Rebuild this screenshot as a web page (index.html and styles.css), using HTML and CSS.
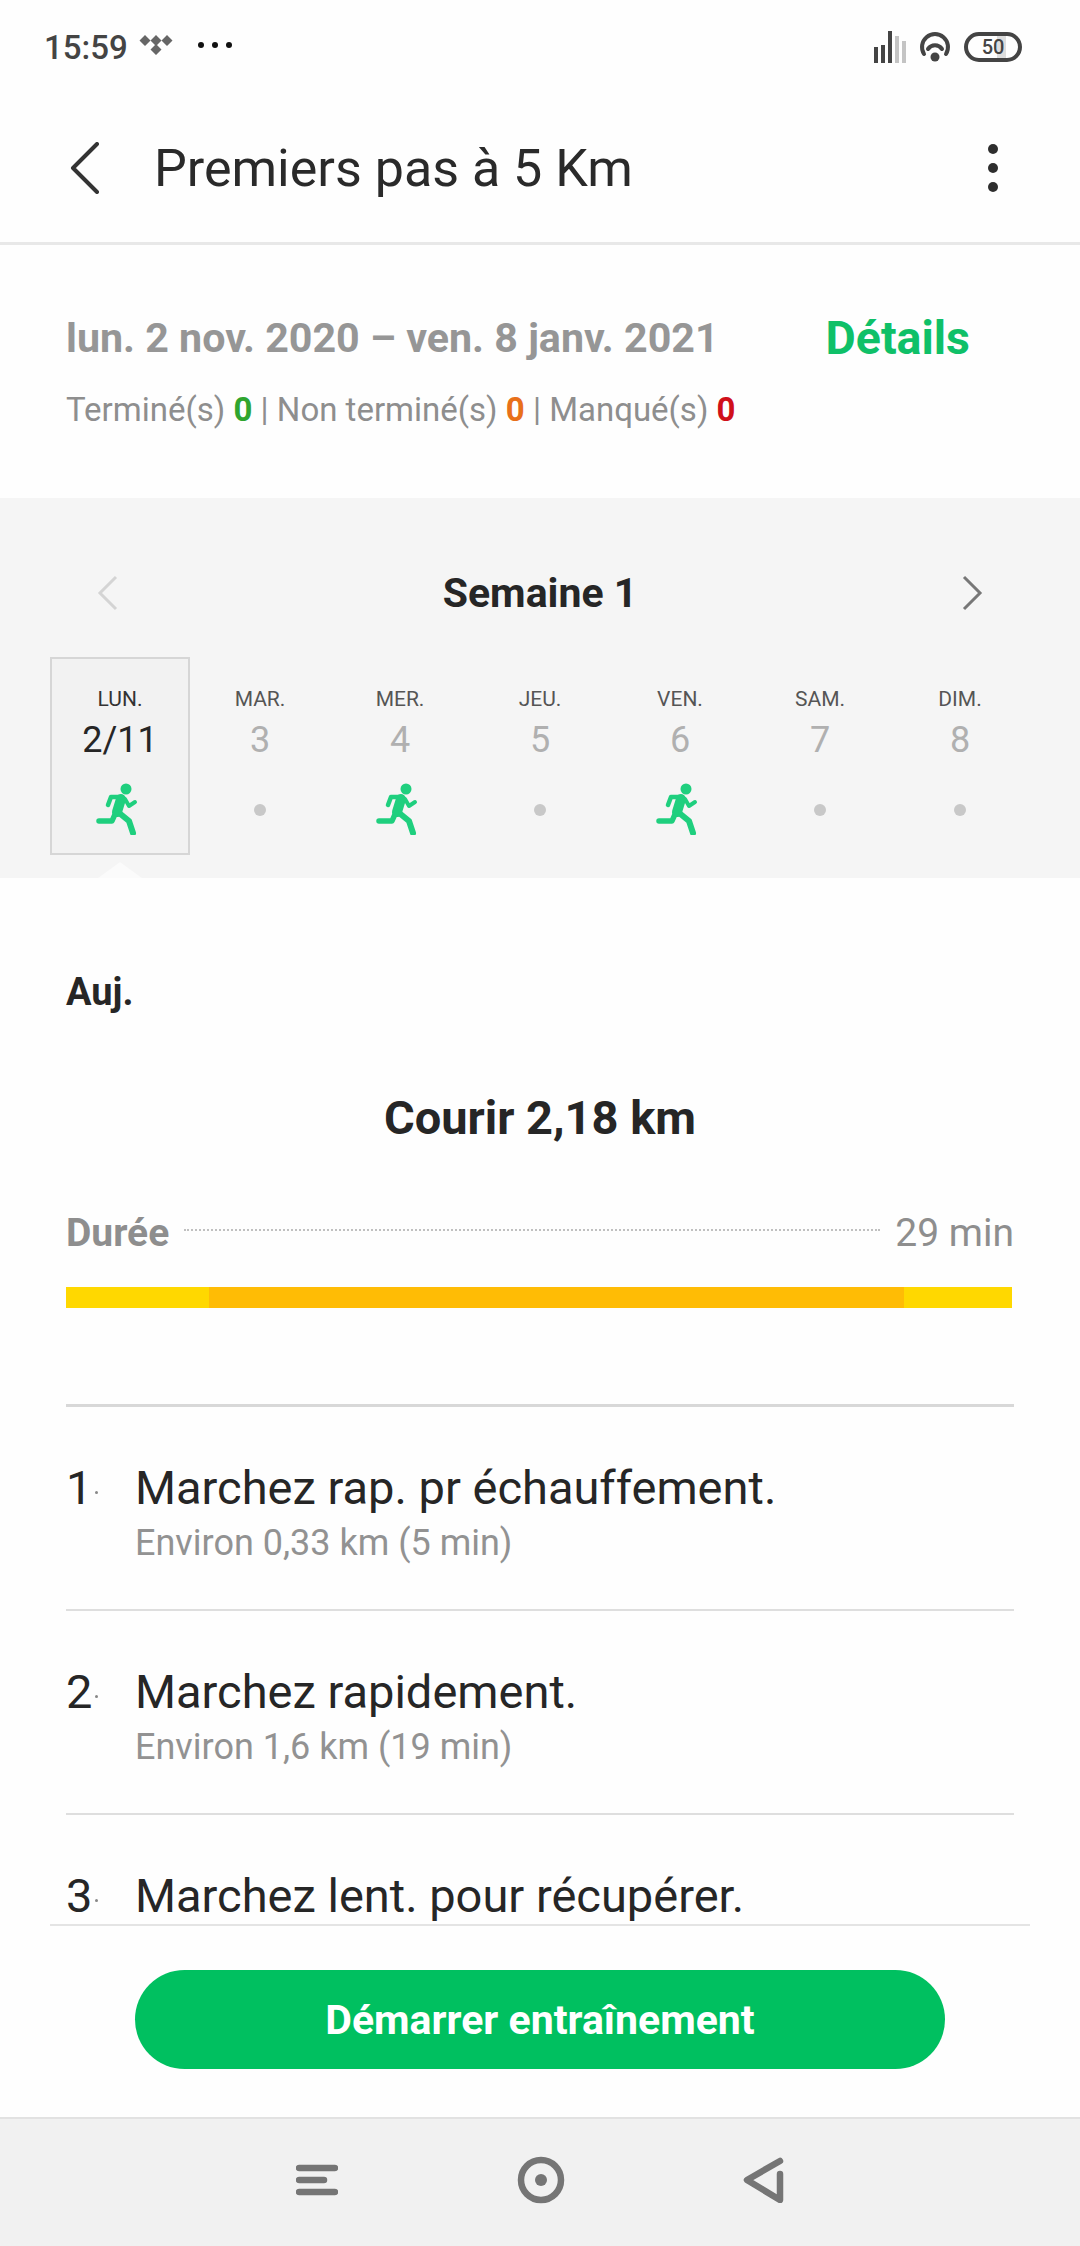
FILE: index.html
```html
<!DOCTYPE html>
<html lang="fr">
<head>
    <meta charset="UTF-8">
    <meta name="viewport" content="width=device-width, initial-scale=1.0">
    <title>Premiers pas à 5 Km</title>
    <link rel="stylesheet" href="styles.css">
</head>
<body>
    <svg class="sprite" width="0" height="0">
        <symbol id="runner" viewBox="0 0 50 52">
            <circle cx="31" cy="6" r="5.500" fill="#1fcf7e"/>
            <path d="M26 16 L22 29" fill="none" stroke="#1fcf7e" stroke-width="10" stroke-linecap="round"/>
            <path d="M27 14 L16 14 L13 22" fill="none" stroke="#1fcf7e" stroke-width="4.500" stroke-linecap="round" stroke-linejoin="round"/>
            <path d="M30 16 L34 23 L40 19" fill="none" stroke="#1fcf7e" stroke-width="4" stroke-linecap="round" stroke-linejoin="round"/>
            <path d="M23 29 L34 38 L38 50" fill="none" stroke="#1fcf7e" stroke-width="6" stroke-linecap="round" stroke-linejoin="round"/>
            <path d="M21 29 L17 38 L4 38" fill="none" stroke="#1fcf7e" stroke-width="5.500" stroke-linecap="round" stroke-linejoin="round"/>
        </symbol>
    </svg>

    <div class="status">
        <div class="status-left">
            <span class="time">15:59</span>
            <svg class="tidal" viewBox="0 0 34 20" width="34" height="20">
                <path d="M6 0l5.500 5.500-5.500 5.500-5.500-5.500zM17 0l5.500 5.500-5.500 5.500-5.500-5.500zM28 0l5.500 5.500-5.500 5.500-5.500-5.500zM17 9l5.500 5.500-5.500 5.500-5.500-5.500z" fill="#666"/>
            </svg>
            <div class="dots"><i></i><i></i><i></i></div>
        </div>
        <div class="status-right">
            <svg viewBox="0 0 32 32" width="32" height="32">
                <rect x="0" y="16" width="4" height="16" fill="#444"/>
                <rect x="7" y="14" width="4" height="18" fill="#444"/>
                <rect x="14" y="0" width="4" height="32" fill="#444"/>
                <rect x="21" y="5" width="4" height="27" fill="#c4c4c4"/>
                <rect x="28" y="10" width="4" height="22" fill="#c4c4c4"/>
            </svg>
            <svg viewBox="0 0 34 32" width="34" height="32">
                <path d="M6 23 A13 13 0 1 1 28 23" fill="none" stroke="#444" stroke-width="4" stroke-linecap="round"/>
                <path d="M10 18 A8.500 8.500 0 0 1 24 18" fill="none" stroke="#444" stroke-width="4" stroke-linecap="round"/>
                <circle cx="17" cy="26" r="4.500" fill="#444"/>
            </svg>
            <div class="battery"><span>50</span></div>
        </div>
    </div>

    <header class="topbar">
        <svg class="back" viewBox="0 0 34 52" width="34" height="52">
            <path d="M29 2 L5 26 L29 50" fill="none" stroke="#333" stroke-width="4" stroke-linecap="round" stroke-linejoin="round"/>
        </svg>
        <h1>Premiers pas à 5 Km</h1>
        <div class="more"><i></i><i></i><i></i></div>
    </header>

    <section class="summary">
        <div class="summary-top">
            <span class="range">lun. 2 nov. 2020 – ven. 8 janv. 2021</span>
            <span class="details">Détails</span>
        </div>
        <p class="counts">Terminé(s) <b class="green">0</b> | Non terminé(s) <b class="orange">0</b> | Manqué(s) <b class="red">0</b></p>
    </section>

    <section class="week">
        <div class="week-head">
            <svg viewBox="0 0 22 36" width="22" height="36"><path d="M19 2 L3 18 L19 34" fill="none" stroke="#d4d4d4" stroke-width="3"/></svg>
            <span>Semaine 1</span>
            <svg viewBox="0 0 22 36" width="22" height="36"><path d="M3 2 L19 18 L3 34" fill="none" stroke="#777" stroke-width="3"/></svg>
        </div>
        <div class="days">
            <div class="day active">
                <span class="dname">LUN.</span>
                <span class="dnum">2/11</span>
                <svg class="run"><use href="#runner"/></svg>
            </div>
            <div class="day">
                <span class="dname">MAR.</span>
                <span class="dnum">3</span>
                <i class="rest"></i>
            </div>
            <div class="day">
                <span class="dname">MER.</span>
                <span class="dnum">4</span>
                <svg class="run"><use href="#runner"/></svg>
            </div>
            <div class="day">
                <span class="dname">JEU.</span>
                <span class="dnum">5</span>
                <i class="rest"></i>
            </div>
            <div class="day">
                <span class="dname">VEN.</span>
                <span class="dnum">6</span>
                <svg class="run"><use href="#runner"/></svg>
            </div>
            <div class="day">
                <span class="dname">SAM.</span>
                <span class="dnum">7</span>
                <i class="rest"></i>
            </div>
            <div class="day">
                <span class="dname">DIM.</span>
                <span class="dnum">8</span>
                <i class="rest"></i>
            </div>
        </div>
        <div class="notch"></div>
    </section>

    <main class="content">
        <h2 class="today">Auj.</h2>
        <h3 class="workout">Courir 2,18 km</h3>
        <div class="duration">
            <b>Durée</b>
            <span class="leader"></span>
            <span class="mins">29 min</span>
        </div>
        <div class="bar">
            <div class="seg-light" style="width: 143px"></div>
            <div class="seg-dark" style="width: 695px"></div>
            <div class="seg-light" style="width: 108px"></div>
        </div>
        <ol class="steps">
            <li>
                <span class="num">1</span>
                <div>
                    <p class="step-title">Marchez rap. pr échauffement.</p>
                    <p class="step-sub">Environ 0,33 km (5 min)</p>
                </div>
            </li>
            <li>
                <span class="num">2</span>
                <div>
                    <p class="step-title">Marchez rapidement.</p>
                    <p class="step-sub">Environ 1,6 km (19 min)</p>
                </div>
            </li>
            <li>
                <span class="num">3</span>
                <div>
                    <p class="step-title">Marchez lent. pour récupérer.</p>
                </div>
            </li>
        </ol>
    </main>

    <div class="action">
        <button class="start">Démarrer entraînement</button>
    </div>

    <nav class="navbar">
        <svg viewBox="0 0 42 32" width="42" height="32">
            <path d="M3 4 H39 M3 16 H28 M3 28 H39" fill="none" stroke="#757575" stroke-width="6.500" stroke-linecap="round"/>
        </svg>
        <svg viewBox="0 0 48 48" width="48" height="48">
            <circle cx="24" cy="24" r="20" fill="none" stroke="#757575" stroke-width="6.500"/>
            <circle cx="24" cy="24" r="6" fill="#757575"/>
        </svg>
        <svg viewBox="0 0 42 46" width="42" height="46">
            <path d="M37 4 L4 23 L37 43 V17" fill="none" stroke="#757575" stroke-width="6.500" stroke-linecap="round" stroke-linejoin="round"/>
        </svg>
    </nav>
</body>
</html>
```

FILE: styles.css
```css
* {
    box-sizing: border-box;
}
body {
    margin: 0;
    width: 1080px;
    height: 2246px;
    display: flex;
    flex-direction: column;
    overflow: hidden;
    background-color: #fefefe;
    font-family: Roboto, "Liberation Sans", sans-serif;
    color: #262626;
}
h1, h2, h3, p, ol {
    margin: 0;
    padding: 0;
}
.sprite {
    position: absolute;
}

/* status bar */
.status {
    height: 94px;
    flex: none;
    display: flex;
    justify-content: space-between;
    align-items: center;
    padding: 0 58px 0 44px;
}
.status-left, .status-right {
    display: flex;
    align-items: center;
}
.time {
    font-size: 33px;
    font-weight: 500;
    color: #444;
}
.tidal {
    margin-left: 11px;
    margin-top: -4px;
}
.dots {
    display: flex;
    gap: 8px;
    margin-left: 25px;
    margin-top: -5px;
}
.dots i {
    width: 6px;
    height: 6px;
    border-radius: 50%;
    background-color: #111;
}
.status-right {
    gap: 12px;
}
.battery {
    width: 58px;
    height: 30px;
    border: 4px solid #444;
    border-radius: 15px;
    font-size: 20px;
    font-weight: 500;
    color: #444;
    text-align: center;
    line-height: 22px;
    background: linear-gradient(to right, #fefefe 58%, #ddd 58%, #ddd 76%, #fefefe 76%);
}

/* title bar */
.topbar {
    height: 151px;
    flex: none;
    display: flex;
    align-items: center;
    padding: 0 82px 0 68px;
    border-bottom: 3px solid #e8e8e8;
}
.topbar h1 {
    flex: 1;
    margin-left: 52px;
    font-size: 52px;
    font-weight: 400;
    color: #2a2a2a;
}
.more {
    display: flex;
    flex-direction: column;
    gap: 9px;
}
.more i {
    width: 10px;
    height: 10px;
    border-radius: 50%;
    background-color: #2e2e2e;
}

/* date range */
.summary {
    height: 253px;
    flex: none;
    padding: 66px 66px 0;
}
.summary-top {
    display: flex;
    justify-content: space-between;
    align-items: center;
    padding-right: 44px;
}
.range {
    font-size: 41.200px;
    font-weight: 700;
    color: #969696;
}
.details {
    font-size: 46.500px;
    font-weight: 700;
    color: #0fc068;
}
.counts {
    margin-top: 25px;
    font-size: 33px;
    color: #8e8e8e;
}
.counts b {
    font-weight: 700;
}
.green {
    color: #2fa52f;
}
.orange {
    color: #e8701a;
}
.red {
    color: #d0101a;
}

/* week selector */
.week {
    height: 380px;
    flex: none;
    position: relative;
    background-color: #f5f5f5;
    padding: 0 50px;
}
.week-head {
    height: 159px;
    display: flex;
    justify-content: space-between;
    align-items: center;
    padding: 31px 47px 0 47px;
}
.week-head span {
    font-size: 41px;
    font-weight: 700;
    color: #262626;
}
.days {
    display: grid;
    grid-template-columns: repeat(7, 140px);
}
.day {
    height: 198px;
    display: flex;
    flex-direction: column;
    align-items: center;
    padding-top: 27px;
    border: 2px solid transparent;
}
.day.active {
    background-color: #f2f2f2;
    border-color: #d6d6d6;
}
.dname {
    font-size: 21px;
    line-height: 26px;
    color: #555;
}
.dnum {
    margin-top: 7px;
    font-size: 36px;
    line-height: 42px;
    color: #b0b0b0;
}
.active .dname {
    color: #333;
}
.active .dnum {
    color: #262626;
}
.run {
    width: 50px;
    height: 52px;
    margin-top: 22px;
}
.rest {
    width: 12px;
    height: 12px;
    margin-top: 43px;
    border-radius: 50%;
    background-color: #c8c8c8;
}
.notch {
    position: absolute;
    left: 98px;
    bottom: 0;
    border-left: 22px solid transparent;
    border-right: 22px solid transparent;
    border-bottom: 16px solid #fbfbfb;
}

/* workout */
.content {
    flex: 1;
    min-height: 0;
    overflow: hidden;
    padding: 0 66px;
}
.today {
    margin-top: 93px;
    font-size: 38px;
    line-height: 42px;
    font-weight: 700;
}
.workout {
    margin-top: 78px;
    font-size: 47px;
    line-height: 54px;
    font-weight: 700;
    text-align: center;
}
.duration {
    margin-top: 66px;
    display: flex;
    align-items: center;
    font-size: 39px;
    line-height: 44px;
    color: #8e8e8e;
}
.duration b {
    font-weight: 700;
}
.leader {
    flex: 1;
    margin: 0 15px;
    border-top: 2px dotted #c0c0c0;
    transform: translateY(-3px);
}
.bar {
    margin-top: 32px;
    display: flex;
    height: 21px;
}
.seg-light {
    background-color: #ffd800;
}
.seg-dark {
    background-color: #ffbc05;
}
.steps {
    margin-top: 96px;
    list-style: none;
    border-top: 3px solid #d8d8d8;
}
.steps li {
    height: 204px;
    display: flex;
    padding-top: 54px;
    border-bottom: 2px solid #dedede;
}
.num {
    position: relative;
    width: 69px;
    font-size: 47px;
    line-height: 54px;
}
.num::after {
    content: "";
    position: absolute;
    left: 29px;
    top: 30px;
    width: 3px;
    height: 3px;
    border-radius: 50%;
    background-color: #888;
}
.step-title {
    font-size: 47px;
    line-height: 54px;
}
.step-sub {
    margin-top: 7px;
    font-size: 36px;
    line-height: 42px;
    color: #929292;
}

/* bottom */
.action {
    height: 193px;
    flex: none;
    position: relative;
    display: flex;
    justify-content: center;
    padding-top: 46px;
}
.action::before {
    content: "";
    position: absolute;
    left: 50px;
    right: 50px;
    top: 0;
    border-top: 2px solid #e4e4e4;
}
.start {
    width: 810px;
    height: 99px;
    border: none;
    border-radius: 50px;
    background-color: #00c060;
    color: #fff;
    font-family: inherit;
    font-size: 41px;
    font-weight: 700;
}
.navbar {
    height: 129px;
    flex: none;
    display: flex;
    justify-content: space-between;
    align-items: center;
    padding: 0 295px 5px 296px;
    background-color: #f1f1f1;
    border-top: 2px solid #e2e2e2;
}
```
